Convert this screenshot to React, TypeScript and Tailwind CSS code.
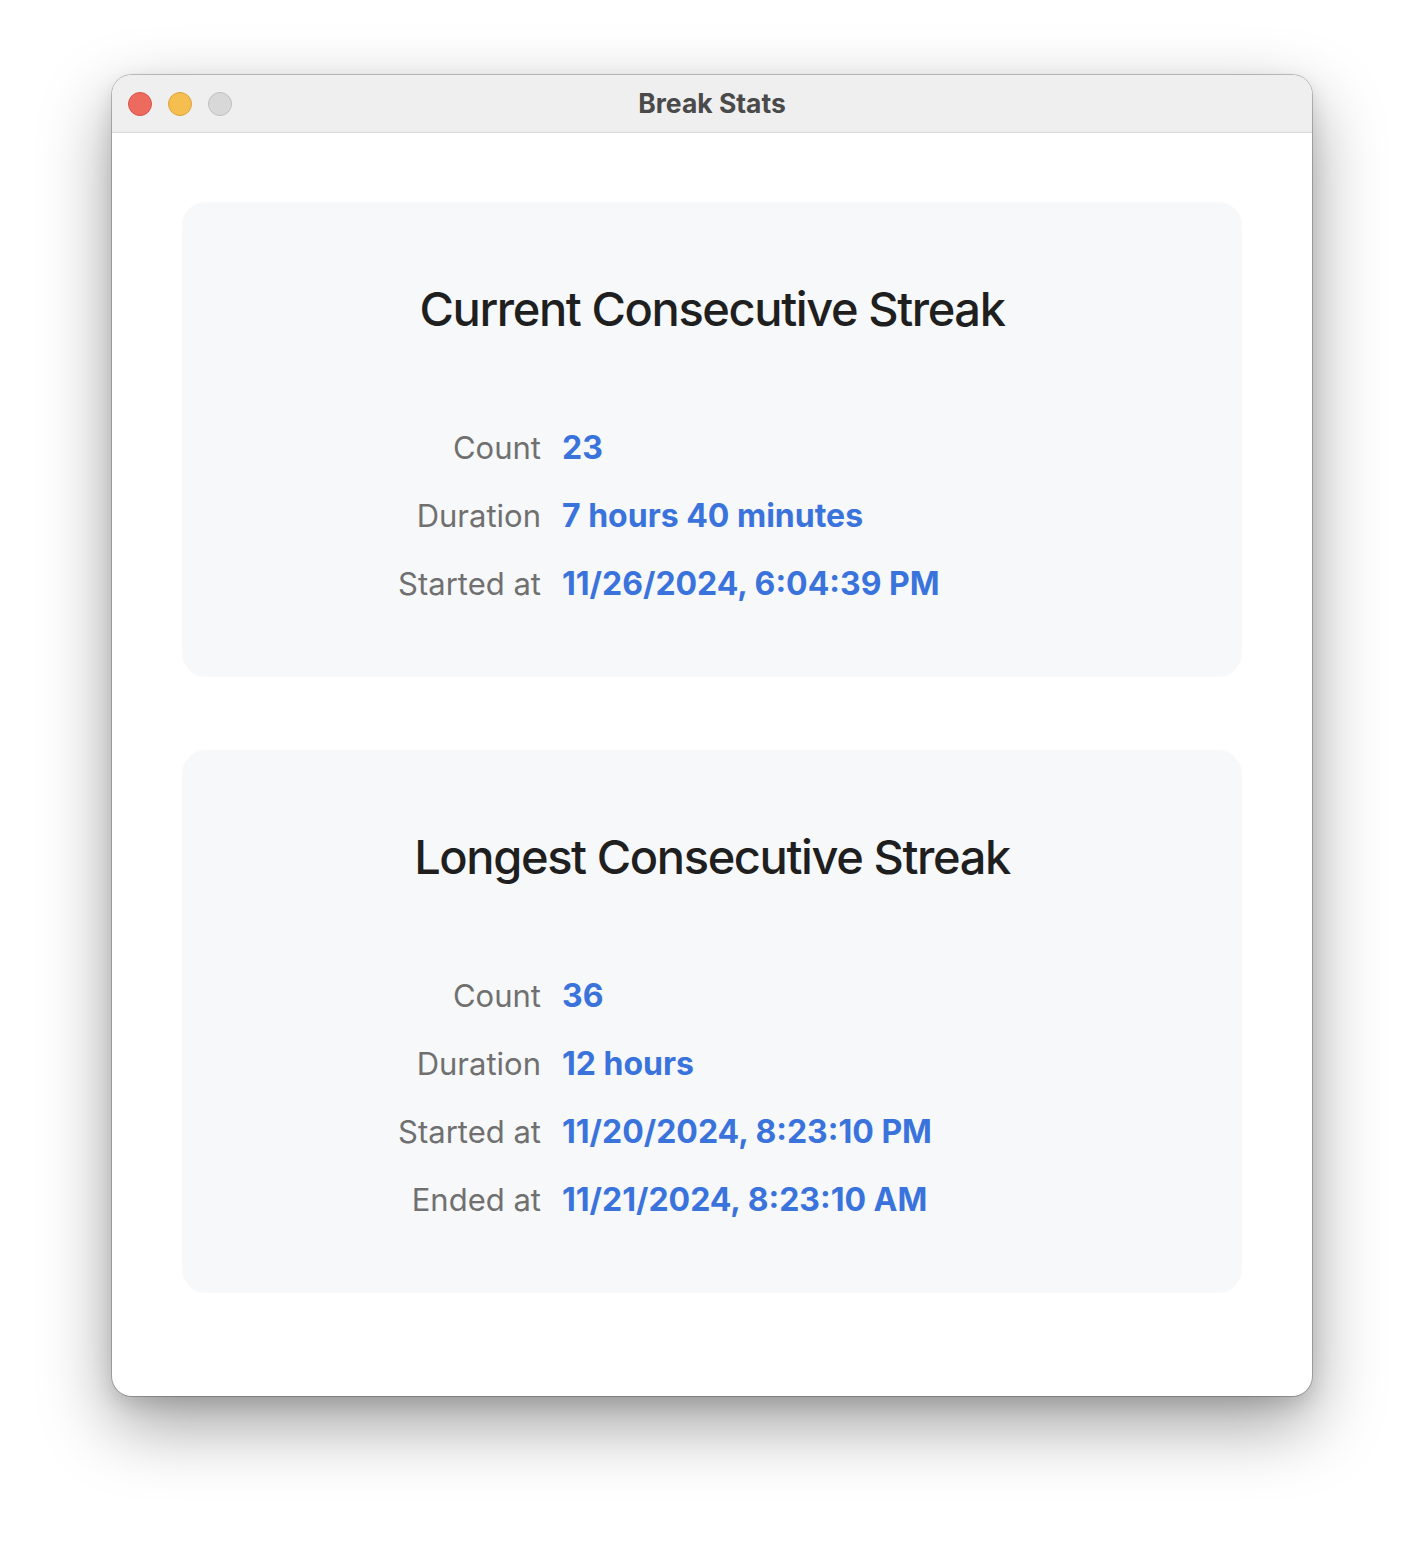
const current = [
  { label: "Count", value: "23" },
  { label: "Duration", value: "7 hours 40 minutes" },
  { label: "Started at", value: "11/26/2024, 6:04:39 PM" },
];

const longest = [
  { label: "Count", value: "36" },
  { label: "Duration", value: "12 hours" },
  { label: "Started at", value: "11/20/2024, 8:23:10 PM" },
  { label: "Ended at", value: "11/21/2024, 8:23:10 AM" },
];

function StreakCard({ title, rows }: { title: string; rows: { label: string; value: string }[] }) {
  return (
    <section className="rounded-[24px] bg-[#f7f8fa] pt-[78px] pb-[59px]">
      <h2 className="text-center text-[47px] leading-[58px] font-medium tracking-[-1.4px] text-[#1f1f1f]">
        {title}
      </h2>
      <div className="mt-[76px] grid grid-cols-[359px_1fr] gap-x-[21px]">
        {rows.map((row) => (
          <div key={row.label} className="contents">
            <div className="text-right text-[31px] leading-[68px] text-[#707070]">{row.label}</div>
            <div className="text-[32px] leading-[68px] font-bold text-[#3a73dc]">{row.value}</div>
          </div>
        ))}
      </div>
    </section>
  );
}

export default function App() {
  return (
    <div
      className="h-[1544px] bg-white pt-[75px] pl-[112px]"
      style={{ fontFamily: "Inter, 'Noto Sans', sans-serif" }}
    >
      <div className="w-[1200px] h-[1321px] overflow-hidden rounded-[20px] bg-white shadow-[0_0_0_1px_rgba(0,0,0,0.22),0_28px_70px_rgba(0,0,0,0.38),0_8px_20px_rgba(0,0,0,0.12)]">
        <header className="relative flex h-[58px] items-center border-b border-[#d9d9d9] bg-[#efefef]">
          <div className="flex gap-4 pl-[16px]">
            <span className="h-6 w-6 rounded-full border border-[#d6554b] bg-[#ec6a5e]" />
            <span className="h-6 w-6 rounded-full border border-[#d9a23e] bg-[#f5bf4f]" />
            <span className="h-6 w-6 rounded-full border border-[#bfbfbf] bg-[#d8d8d8]" />
          </div>
          <h1 className="pointer-events-none absolute inset-x-0 text-center text-[26.5px] font-bold text-[#4a4a4a]">
            Break Stats
          </h1>
        </header>
        <main className="flex flex-col gap-[73px] px-[70px] pt-[69px]">
          <StreakCard title="Current Consecutive Streak" rows={current} />
          <StreakCard title="Longest Consecutive Streak" rows={longest} />
        </main>
      </div>
    </div>
  );
}
